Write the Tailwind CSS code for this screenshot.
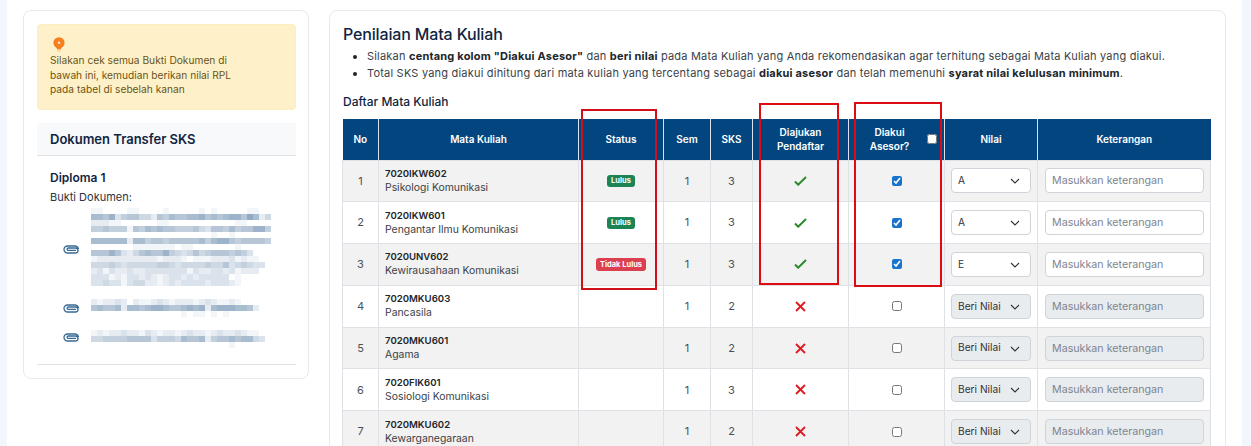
<!DOCTYPE html>
<html lang="en">
<head>
    <meta charset="UTF-8">
    <meta name="viewport" content="width=device-width, initial-scale=1.0">
    <title>Penilaian Mata Kuliah</title>
    <script src="https://cdn.jsdelivr.net/npm/@tailwindcss/browser@4"></script>
</head>
<body class="bg-[#f3f6fd] font-['Inter','Noto_Sans',sans-serif] text-[#212529]">
    <div class="relative h-[446px] overflow-hidden pl-[7px] pr-[9px]">
        <div class="flex h-full items-start gap-[20px] bg-white pl-[16px] pr-[16px] pt-[10px]">

            <!-- left card -->
            <aside class="h-[369px] w-[286px] shrink-0 rounded-lg border border-[#e6e9ef] pl-[13px] pr-[12px] pt-[13px]">
                <div class="h-[86px] rounded border border-[#fdeebf] bg-[#fef1c9] pl-[12px] pt-[12px] text-[10.2px] leading-[14.5px] text-[#6b5315]">
                    <svg class="ml-[3px] h-[15px] w-[12px]" viewBox="0 0 12 15">
                        <circle cx="6" cy="5.8" r="5.6" fill="#f47f20"/>
                        <path d="M3.4 10h5.2L8 12H4z" fill="#f47f20"/>
                        <path d="M4 12.6h4M4.6 14h2.8" stroke="#f7bd85" stroke-width="1"/>
                        <circle cx="6" cy="5.8" r="1.3" fill="#fde2c0"/>
                    </svg>
                    <p class="mt-[1px]">Silakan cek semua Bukti Dokumen di<br>bawah ini, kemudian berikan nilai RPL<br>pada tabel di sebelah kanan</p>
                </div>
                <h2 class="mt-[13px] h-[33px] border-b border-[#dee2e6] bg-[#f8f9fa] pl-[13px] text-[13px] font-semibold leading-[33px] text-[#0f2542]">Dokumen Transfer SKS</h2>
                <div class="border-b border-[#dee2e6] pb-[16px] pl-[13px] pt-[14px]">
                    <h3 class="text-[12px] font-semibold leading-[16px] text-[#0f2542]">Diploma 1</h3>
                    <p class="mt-[4px] text-[11px] leading-[14px] text-[#2b3442]">Bukti Dokumen:</p>
                    <div class="mt-[4px] flex flex-col gap-[13px]">
                        <div class="flex items-center">
                            <svg class="ml-[13px] mt-[4px] h-[9px] w-[16px] shrink-0 text-[#3a6a96]" viewBox="0 0 16 9" fill="none" stroke="currentColor" stroke-width="1.3"><path d="M12.5 1H4.5a3.5 3.5 0 0 0 0 7h8a2.4 2.4 0 0 0 0-5H5.3a1.2 1.2 0 0 0 0 2.4H13M12.5 1a3.5 3.5 0 0 1 3 3"/></svg>
                            <div class="mosaic ml-[12px]" data-rows="110000110000100000101000001100|776835664426576677867678869724|222110000001100000000000110000|556555165767665556436657566885|000000000000000000001001000000|777777277566566666757886566665|000000011111110110000000100000|66686324676685434645666565300|122222222221222101112223121100|44454344444554344445446345433|231322322333333313223323122200|333121332321233232333330100000|334331344221232333323332100000"></div>
                        </div>
                        <div class="flex items-center">
                            <svg class="ml-[13px] h-[9px] w-[16px] shrink-0 text-[#3a6a96]" viewBox="0 0 16 9" fill="none" stroke="currentColor" stroke-width="1.3"><path d="M12.5 1H4.5a3.5 3.5 0 0 0 0 7h8a2.4 2.4 0 0 0 0-5H5.3a1.2 1.2 0 0 0 0 2.4H13M12.5 1a3.5 3.5 0 0 1 3 3"/></svg>
                            <div class="mosaic ml-[12px]" data-rows="2122320211232122212321121|6766727767887667878278887762|0000000000000001011010100"></div>
                        </div>
                        <div class="flex items-center">
                            <svg class="mb-[4px] ml-[13px] h-[9px] w-[16px] shrink-0 text-[#3a6a96]" viewBox="0 0 16 9" fill="none" stroke="currentColor" stroke-width="1.3"><path d="M12.5 1H4.5a3.5 3.5 0 0 0 0 7h8a2.4 2.4 0 0 0 0-5H5.3a1.2 1.2 0 0 0 0 2.4H13M12.5 1a3.5 3.5 0 0 1 3 3"/></svg>
                            <div class="mosaic ml-[12px]" data-rows="12122322132122123221232232110|44555566663555476672566767743|00000000000000000000000100000"></div>
                        </div>
                    </div>
                </div>
            </aside>

            <!-- right card -->
            <main class="h-[500px] flex-1 rounded-lg border border-[#e6e9ef] pl-[12px] pr-[14px] pt-[13px]">
                <h1 class="ml-[1px] text-[16px] font-medium leading-[21px] tracking-[-0.15px] text-[#0f2542]">Penilaian Mata Kuliah</h1>
                <ul class="mt-[3px] list-disc pl-[25px] text-[11px] leading-[17px] tracking-[0.2px] text-[#3a3f47] marker:text-[#212529]">
                    <li>Silakan <b class="font-bold text-[#212529]">centang kolom "Diakui Asesor"</b> dan <b class="font-bold text-[#212529]">beri nilai</b> pada Mata Kuliah yang Anda rekomendasikan agar terhitung sebagai Mata Kuliah yang diakui.</li>
                    <li>Total SKS yang diakui dihitung dari mata kuliah yang tercentang sebagai <b class="font-bold text-[#212529]">diakui asesor</b> dan telah memenuhi <b class="font-bold text-[#212529]">syarat nilai kelulusan minimum</b>.</li>
                </ul>
                <h2 class="ml-[1px] mt-[12px] text-[12px] font-medium leading-[16px] text-[#0f2542]">Daftar Mata Kuliah</h2>
                <table class="mt-[9px] w-[868px] table-fixed border-collapse text-[11px] text-[#4b5057]">
                    <colgroup>
                        <col class="w-[36px]"><col class="w-[200px]"><col class="w-[85px]"><col class="w-[47px]"><col class="w-[42px]"><col class="w-[96px]"><col class="w-[96px]"><col class="w-[93px]"><col class="w-[173px]">
                    </colgroup>
                    <thead class="bg-[#03467f] text-[10px] font-semibold leading-[14px] text-white">
                        <tr class="h-[41px]">
                            <th class="border-r border-[#dbe4ee] font-semibold">No</th>
                            <th class="border-r border-[#dbe4ee] font-semibold">Mata Kuliah</th>
                            <th class="border-r border-[#dbe4ee] font-semibold">Status</th>
                            <th class="border-r border-[#dbe4ee] font-semibold">Sem</th>
                            <th class="border-r border-[#dbe4ee] font-semibold">SKS</th>
                            <th class="border-r border-[#dbe4ee] font-semibold">Diajukan<br>Pendaftar</th>
                            <th class="border-r border-[#dbe4ee] font-semibold">
                                <div class="relative pr-[14px]">Diakui<br>Asesor?<input type="checkbox" class="absolute right-[7px] top-[9px] h-[10px] w-[10px]"></div>
                            </th>
                            <th class="border-r border-[#dbe4ee] font-semibold">Nilai</th>
                            <th class="font-semibold">Keterangan</th>
                        </tr>
                    </thead>
                    <tbody id="rows"></tbody>
                </table>
            </main>
        </div>

        <!-- red highlight boxes drawn over the table -->
        <div class="absolute left-[581px] top-[109px] h-[181px] w-[76px] border-2 border-[#cf1018]"></div>
        <div class="absolute left-[759px] top-[103px] h-[182px] w-[80px] border-2 border-[#dd0b12]"></div>
        <div class="absolute left-[854px] top-[102px] h-[185px] w-[88px] border-2 border-[#dd0b12]"></div>
    </div>

    <script>
        const courses = [
            ['7020IKW602', 'Psikologi Komunikasi', 'Lulus', 1, 3, 'A'],
            ['7020IKW601', 'Pengantar Ilmu Komunikasi', 'Lulus', 1, 3, 'A'],
            ['7020UNV602', 'Kewirausahaan Komunikasi', 'Tidak Lulus', 1, 3, 'E'],
            ['7020MKU603', 'Pancasila', '', 1, 2, ''],
            ['7020MKU601', 'Agama', '', 1, 2, ''],
            ['7020FIK601', 'Sosiologi Komunikasi', '', 1, 3, ''],
            ['7020MKU602', 'Kewarganegaraan', '', 1, 2, ''],
        ];

        const cell = 'border border-[#dee2e6] text-center';
        const chevron = '<svg class="pointer-events-none absolute right-[11px] top-[10px] h-[6px] w-[10px] text-[#333]" viewBox="0 0 10 6" fill="none" stroke="currentColor" stroke-width="1.1"><path d="M1 1l4 4 4-4"/></svg>';
        const check = '<svg class="mx-auto h-[10px] w-[13px] text-[#2a8a2a]" viewBox="0 0 13 10" fill="none" stroke="currentColor" stroke-width="2"><path d="M1 5.5l3.2 3.2L12 1"/></svg>';
        const cross = '<svg class="mx-auto h-[11px] w-[11px] text-[#dc1c24]" viewBox="0 0 11 11" fill="none" stroke="currentColor" stroke-width="1.9"><path d="M1 1l9 9M10 1l-9 9"/></svg>';

        document.querySelector('#rows').innerHTML = courses.map((c, i) => {
            const on = c[5] !== '';
            let badge = '';
            if (c[2] === 'Lulus') badge = '<span class="mx-auto block h-[12px] w-[28px] rounded-[3px] bg-[#1b8354] text-[7.5px] font-bold leading-[12px] text-white">Lulus</span>';
            if (c[2] === 'Tidak Lulus') badge = '<span class="mx-auto block h-[13px] w-[50px] rounded-[3px] bg-[#dc3f50] text-[7.5px] font-bold leading-[13px] text-white">Tidak Lulus</span>';
            return `
                <tr class="h-[41.8px] ${i % 2 === 0 ? 'bg-[#f2f2f2]' : 'bg-white'}">
                    <td class="${cell}">${i + 1}</td>
                    <td class="border border-[#dee2e6] pl-[6px] text-[10.4px] leading-[14px] text-[#3a3f47]"><b class="block text-[9.6px] font-semibold text-[#212529]">${c[0]}</b>${c[1]}</td>
                    <td class="${cell}">${badge}</td>
                    <td class="${cell}">${c[3]}</td>
                    <td class="${cell}">${c[4]}</td>
                    <td class="${cell}">${on ? check : cross}</td>
                    <td class="${cell}"><input type="checkbox" class="mx-auto block h-[10px] w-[10px] accent-[#1873cc]" ${on ? 'checked' : ''}></td>
                    <td class="border border-[#dee2e6] px-[6px]">
                        <div class="relative">
                            <select class="block h-[25px] w-full appearance-none rounded border border-[#ced4da] pl-[6px] text-[10.2px] text-[#333] opacity-100 ${on ? 'bg-white' : 'bg-[#e9ecef]'}" ${on ? '' : 'disabled'}>
                                <option>${on ? c[5] : 'Beri Nilai'}</option>
                            </select>
                            ${chevron}
                        </div>
                    </td>
                    <td class="border border-[#dee2e6] pl-[7px] pr-[6px]">
                        <input type="text" placeholder="Masukkan keterangan" class="block h-[25px] w-full rounded border border-[#ced4da] pl-[6px] text-[10.7px] placeholder:text-[#7d8590] ${on ? 'bg-white' : 'bg-[#e9ecef]'}" ${on ? '' : 'disabled'}>
                    </td>
                </tr>`;
        }).join('');

        // pixelated (blurred) document names, one digit per 6px block
        document.querySelectorAll('.mosaic').forEach(el => {
            el.innerHTML = el.dataset.rows.split('|').map(row =>
                '<div class="flex">' + [...row].map(d => {
                    const t = Number(d) / 9;
                    const rgb = [255 - t * 110, 255 - t * 85, 255 - t * 60].map(Math.round).join(',');
                    return `<span class="h-[6px] w-[6px]" style="background:rgb(${rgb})"></span>`;
                }).join('') + '</div>'
            ).join('');
        });
    </script>
</body>
</html>
